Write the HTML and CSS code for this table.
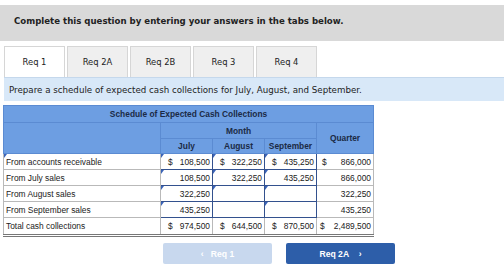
FILE: index.html
```html
<!DOCTYPE html>
<html lang="en">
<head>
  <meta charset="UTF-8" />
  <title>Req 1 - Cash Collections</title>
  <link rel="stylesheet" href="styles.css">
</head>
<body>

  <div class="banner">Complete this question by entering your answers in the tabs below.</div>

  <div class="tabs">
    <div class="tab active">Req 1</div>
    <div class="tab">Req 2A</div>
    <div class="tab">Req 2B</div>
    <div class="tab">Req 3</div>
    <div class="tab">Req 4</div>
  </div>

  <div class="prompt">Prepare a schedule of expected cash collections for July, August, and September.</div>

  <table class="schedule">
    <colgroup>
      <col class="c-label">
      <col class="c-month">
      <col class="c-month">
      <col class="c-month">
      <col class="c-quarter">
    </colgroup>
    <thead>
      <tr class="h-title">
        <th colspan="5">Schedule of Expected Cash Collections</th>
      </tr>
      <tr class="h-month">
        <th rowspan="2"></th>
        <th colspan="3">Month</th>
        <th rowspan="2">Quarter</th>
      </tr>
      <tr class="h-cols">
        <th>July</th>
        <th>August</th>
        <th>September</th>
      </tr>
    </thead>
    <tbody>
      <tr>
        <td class="label mark">From accounts receivable</td>
        <td class="inp mark"><span class="money"><i>$</i>108,500</span></td>
        <td class="inp mark"><span class="money"><i>$</i>322,250</span></td>
        <td class="inp mark"><span class="money"><i>$</i>435,250</span></td>
        <td class="sum"><span class="money"><i>$</i>866,000</span></td>
      </tr>
      <tr>
        <td class="label">From July sales</td>
        <td class="inp mark">108,500</td>
        <td class="inp mark">322,250</td>
        <td class="inp mark">435,250</td>
        <td class="sum">866,000</td>
      </tr>
      <tr>
        <td class="label">From August sales</td>
        <td class="inp mark">322,250</td>
        <td class="inp mark"></td>
        <td class="inp mark"></td>
        <td class="sum">322,250</td>
      </tr>
      <tr>
        <td class="label">From September sales</td>
        <td class="inp mark">435,250</td>
        <td class="inp"></td>
        <td class="inp mark"></td>
        <td class="sum">435,250</td>
      </tr>
      <tr class="total">
        <td class="label">Total cash collections</td>
        <td><span class="money"><i>$</i>974,500</span></td>
        <td><span class="money"><i>$</i>644,500</span></td>
        <td><span class="money"><i>$</i>870,500</span></td>
        <td><span class="money"><i>$</i>2,489,500</span></td>
      </tr>
    </tbody>
  </table>

  <div class="nav">
    <button class="nav-btn prev">&lsaquo;&nbsp;&nbsp;&nbsp;Req 1</button>
    <button class="nav-btn next">Req 2A&nbsp;&nbsp;&nbsp;&nbsp;&rsaquo;</button>
  </div>

</body>
</html>
```

FILE: styles.css
```css
body {
  margin: 0;
  padding-top: 5px;
  background: #fff;
  font-family: "DejaVu Sans", Verdana, sans-serif;
  color: #222;
}

.banner {
  height: 36px;
  line-height: 32px;
  padding-left: 14px;
  background-color: #d9d9d9;
  font-size: 8.6px;
  font-weight: bold;
}

.tabs {
  display: flex;
  margin: 5px 0 0 4px;
  height: 31px;
}

.tab {
  width: 61px;
  margin-right: 2px;
  border: 1px solid #d6d6d6;
  border-bottom: none;
  background-color: #efefef;
  font-size: 8.4px;
  text-align: center;
  line-height: 30px;
  box-sizing: border-box;
}

.tab.active {
  background-color: #fff;
}

.prompt {
  margin-left: 4px;
  height: 24px;
  line-height: 24px;
  padding-left: 5px;
  background-color: #d8e8f8;
  border-top: 1px solid #c5d8ec;
  box-sizing: border-box;
  font-size: 8.7px;
}

/* schedule table */
.schedule {
  margin: 4px 0 0 3px;
  border-collapse: collapse;
  table-layout: fixed;
  width: 370px;
  font-family: "Liberation Sans", Arial, sans-serif;
  font-size: 8.4px;
}

.c-label { width: 157px; }
.c-month { width: 52px; }
.c-quarter { width: 57px; }

.schedule th {
  background-color: #6d9ee2;
  border: 1px solid #5b8bd2;
  font-weight: bold;
  color: #1b2a45;
  padding: 0;
}

.h-title th { height: 16px; }
.h-month th { height: 15px; }
.h-cols th { height: 14px; }

.schedule td {
  height: 15px;
  padding: 0 2px;
  border: 1px solid #b9b9b9;
  text-align: right;
  white-space: nowrap;
}

.schedule td.label {
  text-align: left;
  padding-left: 2px;
}

.schedule td.inp {
  border: 1px solid #33518e;
}

.mark {
  position: relative;
}

.mark::before {
  content: "";
  position: absolute;
  left: 0;
  top: 0;
  border-top: 4px solid #3a63b8;
  border-right: 3px solid transparent;
}

.money {
  display: flex;
  justify-content: space-between;
  padding-left: 5px;
}

.money i {
  font-style: normal;
}

.sum .money {
  padding-left: 3px;
}

.total td {
  height: 16px;
  border-bottom: 3px double #777;
}

.total td:last-child .money {
  padding-left: 1px;
}

/* prev / next buttons */
.nav {
  display: flex;
  gap: 14px;
  margin: 6px 0 0 163px;
}

.nav-btn {
  width: 109px;
  height: 21px;
  border: none;
  border-radius: 2px;
  font-family: "Liberation Sans", Arial, sans-serif;
  font-size: 8.6px;
  font-weight: bold;
  color: #fff;
}

.nav-btn.prev {
  background-color: #c8d8ee;
}

.nav-btn.next {
  background-color: #2d5ea9;
}
```
